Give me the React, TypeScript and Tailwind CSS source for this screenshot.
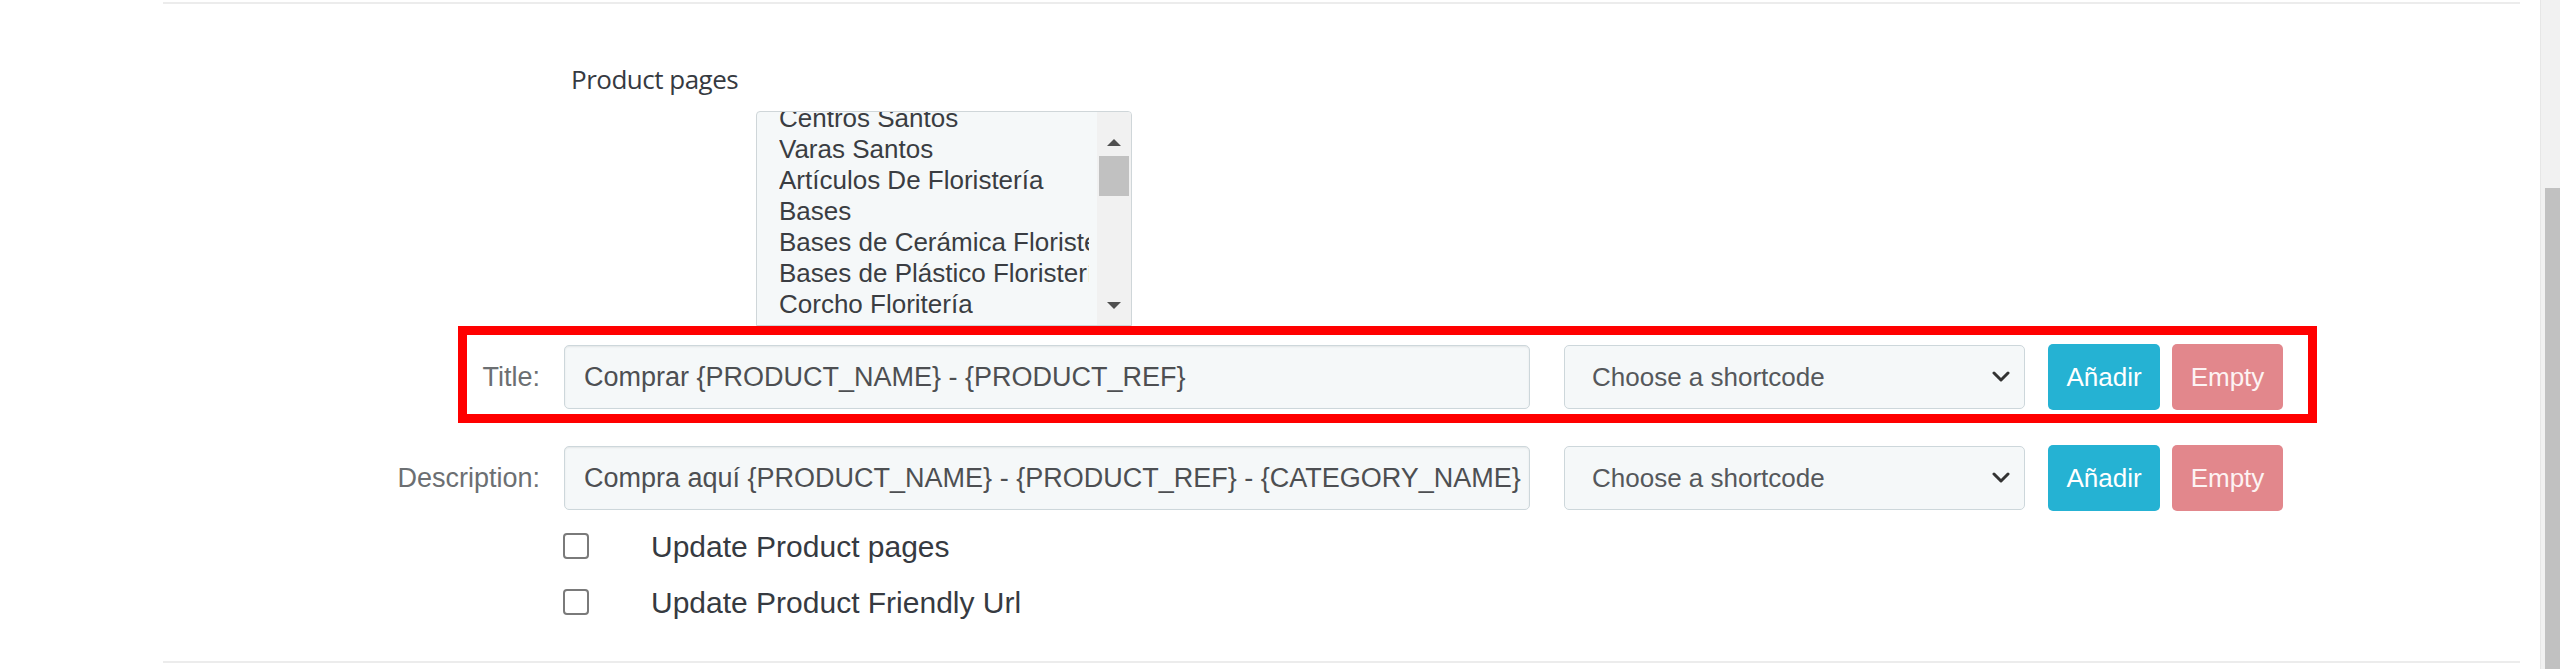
import React from 'react';

const items = [
  'Centros Santos',
  'Varas Santos',
  'Artículos De Floristería',
  'Bases',
  'Bases de Cerámica Floristería',
  'Bases de Plástico Floristería',
  'Corcho Floritería',
  'Espumas Florales',
];

const Chevron = () => (
  <svg width="18" height="12" viewBox="0 0 18 12" fill="none" stroke="#333" strokeWidth="3" strokeLinecap="round" strokeLinejoin="round">
    <path d="M2 2l7 7 7-7" />
  </svg>
);

const ShortcodeRow: React.FC<{ value: string }> = ({ value }) => (
  <>
    <div className="w-[966px] h-[64px] shrink-0 rounded-[5px] border border-[#cdd7db] bg-[#f5f8f9] shadow-[inset_0_1px_2px_rgba(0,0,0,0.08)] flex items-center pl-[19px] text-[27px] text-[#4d4f52] whitespace-nowrap overflow-hidden">
      {value}
    </div>
    <div className="ml-[34px] w-[461px] h-[64px] shrink-0 rounded-[5px] border border-[#cdd7db] bg-[#f5f8f9] flex items-center justify-between pl-[27px] pr-[14px] text-[26px] text-[#55585c]">
      <span>Choose a shortcode</span>
      <Chevron />
    </div>
    <button className="ml-[23px] w-[112px] h-[66px] shrink-0 rounded-[5px] bg-[#25b2d3] text-white text-[26px]">Añadir</button>
    <button className="ml-[12px] w-[111px] h-[66px] shrink-0 rounded-[5px] bg-[#e2878c] text-[#fdf3f3] text-[26px]">Empty</button>
  </>
);

export default function App() {
  return (
    <div className="flex w-[2560px] h-[669px] bg-white overflow-hidden font-['Liberation_Sans',Arial,sans-serif]">
      <div className="flex-1 pl-[163px] pr-[20px]">
        <div className="mt-[2px] h-[661px] border-t-2 border-b-2 border-[#ececec] flex flex-col">
          {/* Product pages */}
          <div className="mt-[57px] ml-[408px] text-[26px] leading-[36px] text-[#363a41] font-['Open_Sans',sans-serif] tracking-[-0.5px]">
            Product pages
          </div>
          <div className="mt-[14px] ml-[593px] w-[376px] h-[215px] flex border border-[#cfd6d9] rounded-t-[4px] bg-[#f5f8f9] overflow-hidden">
            <div className="flex-1 min-w-0 pl-[22px] pr-[8px]">
              <div className="h-full overflow-hidden">
                <div className="-mt-[9px]">
                  {items.map((it) => (
                    <div key={it} className="h-[31px] leading-[31px] text-[26px] text-[#3a3d42] whitespace-nowrap">
                      {it}
                    </div>
                  ))}
                </div>
              </div>
            </div>
            <div className="w-[34px] shrink-0 bg-[#f1f1f1] flex flex-col items-center">
              <div className="mt-[27px] w-0 h-0 border-l-[7px] border-r-[7px] border-b-[7px] border-l-transparent border-r-transparent border-b-[#505050]" />
              <div className="mt-[10px] w-[30px] h-[40px] bg-[#c1c1c1]" />
              <div className="mt-auto mb-[16px] w-0 h-0 border-l-[7px] border-r-[7px] border-t-[7px] border-l-transparent border-r-transparent border-t-[#505050]" />
            </div>
          </div>

          {/* Title row, highlighted */}
          <div className="ml-[295px] w-[1859px] h-[97px] border-[9px] border-[#ff0000] flex items-center pt-[5px]">
            <div className="w-[73px] shrink-0 text-right text-[27px] text-[#6c6f72]">Title:</div>
            <div className="ml-[24px] flex items-center">
              <ShortcodeRow value="Comprar {PRODUCT_NAME} - {PRODUCT_REF}" />
            </div>
          </div>

          {/* Description row */}
          <div className="mt-[22px] ml-[217px] flex items-center">
            <div className="w-[160px] shrink-0 text-right text-[27px] text-[#6c6f72] whitespace-nowrap">Description:</div>
            <div className="ml-[24px] flex items-center">
              <ShortcodeRow value="Compra aquí {PRODUCT_NAME} - {PRODUCT_REF} - {CATEGORY_NAME}" />
            </div>
          </div>

          {/* Checkboxes */}
          <div className="mt-[7px] ml-[400px] flex flex-col">
            {['Update Product pages', 'Update Product Friendly Url'].map((t) => (
              <label key={t} className="h-[56px] flex items-center">
                <span className="w-[26px] h-[26px] rounded-[4px] border-2 border-[#7a7a7a] bg-white" />
                <span className="ml-[62px] text-[30px] text-[#363a41]">{t}</span>
              </label>
            ))}
          </div>
        </div>
      </div>
      {/* page scrollbar */}
      <div className="w-[20px] bg-[#f1f1f1] flex flex-col border-l border-[#e6e6e6]">
        <div className="h-[188px]" />
        <div className="flex-1 ml-[4px] bg-[#c1c1c1]" />
      </div>
    </div>
  );
}
